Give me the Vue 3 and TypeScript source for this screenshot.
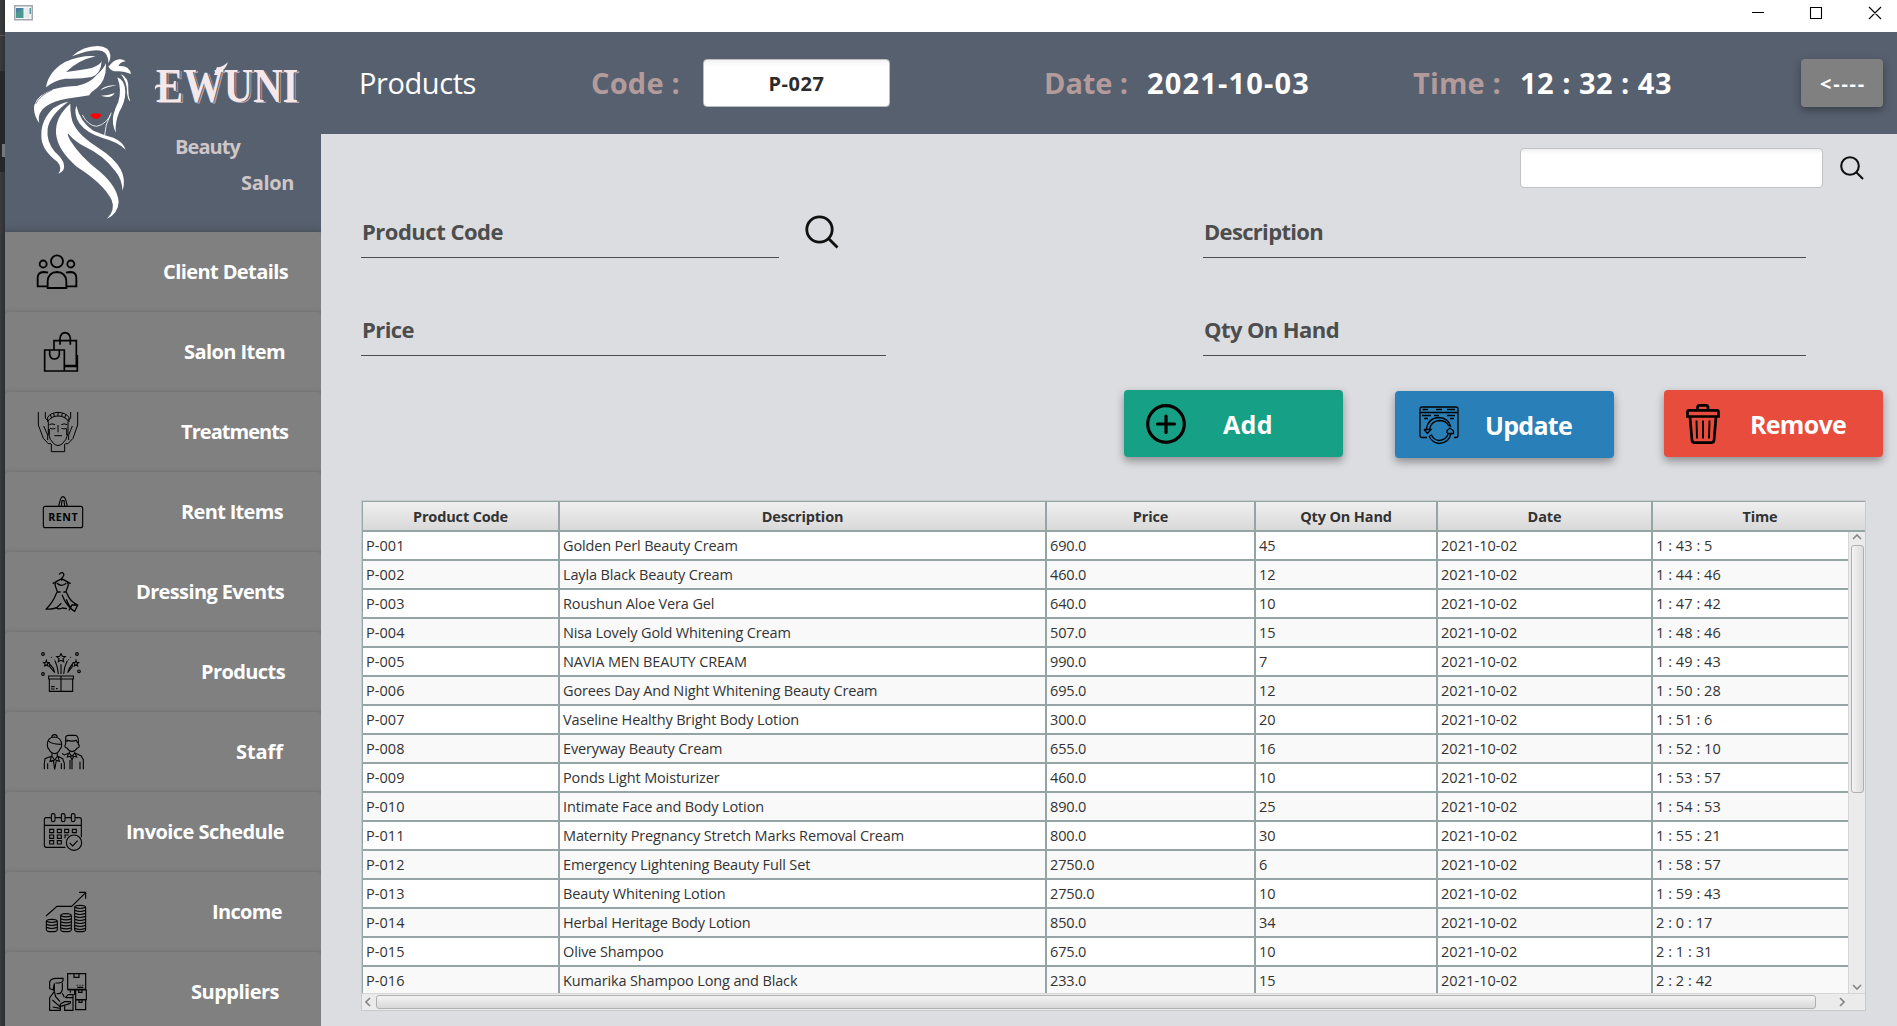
<script setup lang="ts">
import type { Directive } from 'vue'

interface NavItem {
  label: string
  width: number
  right: number
  y: number
  stroke: number
  path: string
}

interface Product {
  code: string
  description: string
  price: string
  qty: string
  time: string
}

// Spreads the letters of a caption over the given width in pixels.
const vFit: Directive<HTMLElement, number> = {
  mounted(el, { value }) {
    const count = (el.textContent ?? '').trim().length
    const natural = el.getBoundingClientRect().width
    el.style.letterSpacing = `${(value - natural) / count}px`
  },
}

const nav: NavItem[] = [
  {
    label: 'Client Details', width: 125, right: 33, y: 21, stroke: 5.5,
    path: 'M153 109a18 18 0 1 0 36 0a18 18 0 1 0-36 0M119 117a10.500 10.500 0 1 0 21 0a10.500 10.500 0 1 0-21 0M202 117a10.500 10.500 0 1 0 21 0a10.500 10.500 0 1 0-21 0M143 189V168Q145 142 171 141Q197 142 199 168V189ZM143 184H113V158Q114 142 130 141Q138 141 144 143M199 184H229V158Q228 142 213 141Q204 141 198 143',
  },
  {
    label: 'Salon Item', width: 101, right: 36, y: 261, stroke: 5,
    path: 'M134 375H193V438H134ZM149 376V388Q151 402 163 402Q176 402 178 388V376M162 374V347H229V422H194M180 359V340Q182 324 195 323Q209 324 211 340V359M194 438H232V390M194 424H232',
  },
  {
    label: 'Treatments', width: 107, right: 33, y: 501, stroke: 3,
    path: 'M115 561V600L130 640L145 656H153M233 561V600L219 640L204 656H196M136 561V580L146 588M212 561V580L202 588M143 577Q152 563 174 562Q198 563 207 577V590Q196 573 174 573Q154 573 143 590V577M151 569L155 580M161 564L163 575M174 562V573M187 564L185 575M197 569L194 580M145 590V625Q149 646 161 656Q174 667 187 656Q200 646 204 625V590M148 599Q156 594 165 599M184 599Q193 594 201 599M150 610Q158 614 166 610M184 610Q192 614 200 610M174 600V622M163 632H186M154 657V680H194V657M131 603L143 630V645M217 603L206 630V645M148 612V630M200 612V630',
  },
  {
    label: 'Rent Items', width: 102, right: 38, y: 6, stroke: 3.4,
    path: 'M136 109H242Q248 109 248 115V167Q248 173 242 173H136Q130 173 130 167V115Q130 109 136 109ZM176 108L182 86Q189 74 196 86L202 108M184 108L186 92H192L194 108',
  },
  {
    label: 'Dressing Events', width: 148, right: 37, y: 246, stroke: 3.8,
    path: 'M178 314Q180 307 187 308Q195 312 189 320L185 325V332M185 326L158 341M185 326L212 341M168 336L165 345L172 365L168 373Q160 395 139 417Q155 419 170 413L184 400M202 336L205 345L198 365L202 373Q210 395 233 405L224 424Q200 410 186 374M171 340Q184 352 199 340M172 366H182M190 366H198M169 414Q178 419 187 414L201 416M199 388Q207 410 218 421M207 421L216 405L232 405',
  },
  {
    label: 'Products', width: 84, right: 36, y: 486, stroke: 3.3,
    path: 'M146 618H220V627H146ZM148 628V664H218V628M183 618V664M153 650H164M168 656H173M153 657H164M183 551L187 559L196 560L189 566L191 575L183 571L175 575L177 566L170 560L179 559ZM139 571L141 577L147 578L142 582L144 588L139 585L134 588L135 582L131 578L137 577ZM228 571L230 577L236 578L231 582L233 588L228 585L223 588L224 582L220 578L226 577ZM183 583V612M175 612L172 592L165 572M191 612L194 592L202 572M164 608L160 595L149 582V590ZM203 608L208 595L217 582V590ZM125 552a4 4 0 1 0 8 0a4 4 0 1 0-8 0M227 552a4 4 0 1 0 8 0a4 4 0 1 0-8 0M125 612a4 4 0 1 0 8 0a4 4 0 1 0-8 0M233 604a4 4 0 1 0 8 0a4 4 0 1 0-8 0M154 562H156M162 569H163M204 569H206M210 562H212',
  },
  {
    label: 'Staff', width: 47, right: 38, y: 36, stroke: 3.3,
    path: 'M155 112Q156 104 164 104Q171 104 172 112M142 136Q141 112 163 111Q185 112 185 136Q185 145 180 147Q175 160 164 161Q152 160 147 148Q142 145 142 136M146 123Q152 132 182 133M156 160V169L164 180L172 169V160M156 168L135 176L133 190V208M172 168L188 176L193 190V208M154 170L150 184L160 181L164 208L169 181L178 184L174 170M143 190V207M184 190V207M149 184H158M197 133V111Q199 106 206 106H227Q237 109 235 133Q240 136 236 142L231 145Q226 154 216 155Q206 154 202 145L196 142Q193 136 197 133M201 126V121Q217 126 229 121L233 129M208 155V160L216 169L224 160V155M208 159L193 165L186 160M224 159L243 167L250 179V208M205 161L202 171L211 169L216 180L221 169L230 171L226 161M216 175V208M210 180V208M240 185V208',
  },
  {
    label: 'Invoice Schedule', width: 158, right: 37, y: 276, stroke: 3.3,
    path: 'M196 442H139Q133 442 133 436V359Q133 353 139 353H152M165 353H182M196 353H213M226 353H238Q244 353 244 359V412M133 376H244M154 345Q154 341 159 341Q165 341 165 345V360Q165 365 159 365Q154 365 154 360ZM184 345Q184 341 189 341Q195 341 195 345V360Q195 365 189 365Q184 365 184 360ZM214 345Q214 341 219 341Q225 341 225 345V360Q225 365 219 365Q214 365 214 360ZM149 388H161V398H149ZM172 388H184V398H172ZM194 388H206V398H194ZM217 388H229V398H217ZM149 405H161V415H149ZM172 405H184V415H172ZM149 422H161V432H149ZM172 422H184V432H172ZM195 415V405H206M199 428a23 23 0 1 0 46 0a23 23 0 1 0-46 0M209 429L218 438L233 422',
  },
  {
    label: 'Income', width: 70, right: 39, y: 516, stroke: 3.3,
    path: 'M138 648L171 619H215L257 578M237 577H257V596M139 664Q139 658 155 658Q172 658 172 664V689Q172 695 155 695Q139 695 139 689ZM139 664Q155 671 172 664M139 673Q155 680 172 673M139 682Q155 689 172 682M182 647Q182 641 198 641Q214 641 214 647V689Q214 695 198 695Q182 695 182 689ZM182 647Q198 654 214 647M182 656Q198 663 214 656M182 665Q198 672 214 665M182 674Q198 681 214 674M182 683Q198 690 214 683M224 622Q224 616 240 616Q257 616 257 622V689Q257 695 240 695Q224 695 224 689ZM224 622Q240 629 257 622M224 631Q240 638 257 631M224 640Q240 647 257 640M224 649Q240 656 257 649M224 658Q240 665 257 658M224 667Q240 674 257 667M224 676Q240 683 257 676M224 685Q240 692 257 685',
  },
  {
    label: 'Suppliers', width: 88, right: 42, y: 756, stroke: 3.5,
    path: 'M203 821H257V868H203ZM222 821V832H237V821M232 854V857M240 854V857M248 854V857M232 862H250M203 870H224V885M227 870H259V899H227ZM236 870V877H246V870M227 900H257V929H227ZM237 900V907H246V900M196 893L205 884H219V931H194V915M196 893H219M211 872V878M163 850L159 870L149 866V845Q154 834 170 835H189V842Q185 850 166 849M187 849V868Q185 880 176 881H170M163 851V875L149 893V931H181V912L194 905H211Q213 909 209 911L180 920L157 900M163 875L167 890L180 905M187 880L193 892M158 921L181 925',
  },
]

const products: Product[] = [
  { code: 'P-001', description: 'Golden Perl Beauty Cream', price: '690.0', qty: '45', time: '1 : 43 : 5' },
  { code: 'P-002', description: 'Layla Black Beauty Cream', price: '460.0', qty: '12', time: '1 : 44 : 46' },
  { code: 'P-003', description: 'Roushun Aloe Vera Gel', price: '640.0', qty: '10', time: '1 : 47 : 42' },
  { code: 'P-004', description: 'Nisa Lovely Gold Whitening Cream', price: '507.0', qty: '15', time: '1 : 48 : 46' },
  { code: 'P-005', description: 'NAVIA MEN BEAUTY CREAM', price: '990.0', qty: '7', time: '1 : 49 : 43' },
  { code: 'P-006', description: 'Gorees Day And Night Whitening Beauty Cream', price: '695.0', qty: '12', time: '1 : 50 : 28' },
  { code: 'P-007', description: 'Vaseline Healthy Bright Body Lotion', price: '300.0', qty: '20', time: '1 : 51 : 6' },
  { code: 'P-008', description: 'Everyway Beauty Cream', price: '655.0', qty: '16', time: '1 : 52 : 10' },
  { code: 'P-009', description: 'Ponds Light Moisturizer', price: '460.0', qty: '10', time: '1 : 53 : 57' },
  { code: 'P-010', description: 'Intimate Face and Body Lotion', price: '890.0', qty: '25', time: '1 : 54 : 53' },
  { code: 'P-011', description: 'Maternity Pregnancy Stretch Marks Removal Cream', price: '800.0', qty: '30', time: '1 : 55 : 21' },
  { code: 'P-012', description: 'Emergency Lightening Beauty Full Set', price: '2750.0', qty: '6', time: '1 : 58 : 57' },
  { code: 'P-013', description: 'Beauty Whitening Lotion', price: '2750.0', qty: '10', time: '1 : 59 : 43' },
  { code: 'P-014', description: 'Herbal Heritage Body Lotion', price: '850.0', qty: '34', time: '2 : 0 : 17' },
  { code: 'P-015', description: 'Olive Shampoo', price: '675.0', qty: '10', time: '2 : 1 : 31' },
  { code: 'P-016', description: 'Kumarika Shampoo Long and Black', price: '233.0', qty: '15', time: '2 : 2 : 42' },
]
</script>

<template>
  <div class="screen">
    <div class="desktop-edge"><i class="e1"></i><i class="e2"></i><i class="e3"></i></div>
    <div class="window">
      <div class="titlebar">
        <svg class="app-icon" width="19" height="16" viewBox="0 0 19 16">
          <rect x=".75" y=".75" width="17.500" height="14" fill="#f4f5f7" stroke="#a4a8ae" stroke-width="1.500" />
          <rect x="2" y="3" width="7.500" height="10" fill="#4a9a92" />
          <path d="M2 3H9.500L2 8Z" fill="#477fa5" />
          <rect x="10.500" y="3" width="5" height="10" fill="#e9ecef" />
          <rect x="15.500" y="3" width="1.500" height="6" fill="#4f9fa5" />
        </svg>
        <svg class="controls" width="140" height="32" viewBox="1750 0 140 32" fill="none" stroke="#000" stroke-width="1.100">
          <path d="M1752 12.500H1764M1810.500 7.500H1821.500V18.500H1810.500ZM1869 7L1881 19M1881 7L1869 19" />
        </svg>
      </div>

      <div class="body">
        <aside class="sidebar">
          <div class="brand">
            <svg class="lady" width="99" height="175" viewBox="99 135 297 525" fill="#fff">
              <path d="M216 169Q250 138 293 138Q329 140 331 165Q332 180 325 188Q325 162 308 154Q280 143 216 169Z" />
              <path d="M138 262Q145 215 195 186Q245 165 287 169Q235 180 198 216Q245 210 275 204Q298 196 305 184Q303 222 275 231Q240 238 195 236Q160 242 138 262Z" />
              <path d="M318 190Q320 240 290 265Q270 279 268 286L240 290Q150 300 128 328Q112 345 118 370Q98 340 103 315Q112 285 160 268Q200 258 230 258Q270 250 290 225Q310 208 318 190Z" />
              <path d="M107 312Q120 285 157 270" fill="none" stroke="#57606f" stroke-width="2" />
              <path d="M325 200Q345 175 362 178Q372 180 377 184Q360 186 355 198Q388 195 393 222Q370 212 350 214Q335 215 325 200Z" />
              <path d="M362 222Q388 232 385 270Q384 290 391 304Q384 302 381 280Q382 245 362 222Z" />
              <path d="M352 232Q375 240 376 275Q376 305 358 335Q345 365 347 398Q335 370 340 345Q345 325 355 305Q366 270 352 232Z" />
              <path d="M205 305Q150 345 143 385Q138 425 165 456Q200 486 190 510Q185 518 175 521Q188 503 172 485Q125 450 124 410Q122 360 160 325Q180 310 205 305Z" />
              <path d="M211 311Q165 350 168 400Q172 450 230 500Q310 550 335 600Q347 630 321 656Q355 640 356 605Q352 560 300 515Q240 470 210 420Q200 400 205 401Q225 425 255 440Q310 465 345 512Q365 535 368 572Q378 540 362 508Q345 475 290 440Q220 395 214 350Q210 330 211 311Z" />
              <path d="M229 317Q220 340 238 370Q260 400 310 415Q350 425 377 449Q370 426 340 413Q310 405 280 392Q240 365 229 317Z" />
              <path d="M247 345Q265 378 290 379Q322 372 334 338M331 345Q315 375 314 405" fill="none" stroke="#fff" stroke-width="2.500" />
              <path d="M300 271Q318 254 350 256Q325 259 300 271ZM303 287Q325 287 344 279Q338 291 322 291Q310 290 303 287Z" />
              <path d="M270 346Q280 337 288 341Q296 337 305 346Q297 357 288 357Q278 356 270 346Z" fill="#f00" />
            </svg>
            <div class="brand-text">
              <div class="ewuni">
                <span>EWUNI</span>
                <svg width="150" height="50" viewBox="0 0 150 50" fill="#f4e8ea">
                  <path d="M60 14L63 6Q68 7 74 1Q72 8 67 10L65 14Z" />
                  <path d="M1 29Q0 23 5 23.500L14 25V26.500L5 26Q2 26 1 29Z" />
                </svg>
              </div>
              <div class="beauty"><span v-fit="65">Beauty</span></div>
              <div class="salon"><span v-fit="53">Salon</span></div>
            </div>
          </div>
          <nav>
            <a v-for="item in nav" :key="item.label" class="nav-item">
              <svg width="90" height="80" :viewBox="`15 ${item.y} 270 240`" fill="none" stroke="#000" :stroke-width="item.stroke">
                <path :d="item.path" />
                <text v-if="item.label === 'Rent Items'" x="145" y="153" textLength="88" class="rent">RENT</text>
              </svg>
              <span v-fit="item.width" :style="{ marginRight: item.right + 'px' }">{{ item.label }}</span>
            </a>
          </nav>
        </aside>

        <div class="main">
          <header class="header">
            <span v-fit="117" class="title">Products</span>
            <span v-fit="89" class="tag code-tag">Code :</span>
            <div class="code-box"><span v-fit="56">P-027</span></div>
            <span v-fit="84" class="tag date-tag">Date :</span>
            <span v-fit="163" class="value date">2021-10-03</span>
            <span v-fit="88" class="tag time-tag">Time :</span>
            <span v-fit="152" class="value time">12 : 32 : 43</span>
            <button class="back"><span v-fit="46">&lt;----</span></button>
          </header>

          <section class="content">
            <div class="search-row">
              <div class="search-box"></div>
              <svg width="24" height="24" viewBox="0 0 24 24" fill="none" stroke="#111" stroke-width="2.100">
                <circle cx="10" cy="10" r="8.800" /><path d="M16.500 16.500L23 23" />
              </svg>
            </div>

            <div class="form">
              <div class="form-row">
                <div class="field f1"><span v-fit="141">Product Code</span></div>
                <svg class="lens" width="34" height="34" viewBox="0 0 34 34" fill="none" stroke="#111" stroke-width="2.800">
                  <circle cx="14.500" cy="14.500" r="12.700" /><path d="M23.500 23.500L32.500 32.500" />
                </svg>
                <div class="field f2"><span v-fit="119">Description</span></div>
              </div>
              <div class="form-row">
                <div class="field f3"><span v-fit="52">Price</span></div>
                <div class="field f4"><span v-fit="135">Qty On Hand</span></div>
              </div>
            </div>

            <div class="actions">
              <button class="btn add">
                <svg width="40" height="40" viewBox="0 0 40 40" fill="none" stroke="#000" stroke-width="3.200">
                  <circle cx="20" cy="20" r="18.300" /><path d="M20 12V28.500M11.500 20H28.500" stroke-linecap="round" />
                </svg>
                <span v-fit="50">Add</span>
              </button>
              <button class="btn update">
                <svg width="40" height="40" viewBox="0 -1 40 40" fill="none" stroke="#000" stroke-width="1.300">
                  <path d="M8 31.500H3Q1 31.500 1 29.500V3Q1 1 3 1H37Q39 1 39 3V29.500Q39 31.500 37 31.500H35M1 6.500H39M3.500 3.500H9M17 3.500H23M28 3.500H36M3 9.500H12M15 9.500H20M28 9.500H36M5 12.500H9M31 12.500H35" />
                  <path d="M7.500 23Q9 12 20 11.500Q29 12 31.500 20L29.500 19.500Q27 14.500 20 14.500Q12 15.500 10.500 23M5 23.500L8.500 27.500L12 23.500H5M10.500 30L12.500 29Q15 34 20 34.500Q27 34 29.500 27.500M32 27.500Q30 37 20 37.500Q13 36.500 10 30M28 27V24.500L31 22L34.500 25V27.500H28" />
                </svg>
                <span v-fit="87">Update</span>
              </button>
              <button class="btn remove">
                <svg width="34" height="40" viewBox="0 0 34 40" fill="none" stroke="#000" stroke-width="2.700">
                  <path d="M3 6.300H31Q32.500 6.300 32.500 8V12.500H1.500V8Q1.500 6.300 3 6.300ZM11.500 6V3Q12 1.300 13.500 1.300H20Q21.500 1.300 22 3V6M4 13L6 36.500Q6.300 38.700 8.500 38.700H25.500Q27.700 38.700 28 36.500L30 13" />
                  <path d="M10.500 16.500L11 34.500M17 16.500V34.500M23.500 16.500L23 34.500" stroke-width="1.900" />
                </svg>
                <span v-fit="96">Remove</span>
              </button>
            </div>

            <div class="table">
              <div class="thead">
                <div>Product Code</div>
                <div>Description</div>
                <div>Price</div>
                <div>Qty On Hand</div>
                <div>Date</div>
                <div>Time</div>
              </div>
              <div class="tbody">
                <div class="rows">
                  <div v-for="p in products" :key="p.code" class="row">
                    <div class="figure">{{ p.code }}</div>
                    <div>{{ p.description }}</div>
                    <div>{{ p.price }}</div>
                    <div>{{ p.qty }}</div>
                    <div class="figure">2021-10-02</div>
                    <div class="figure">{{ p.time }}</div>
                  </div>
                </div>
                <div class="vbar">
                  <svg width="10" height="6" viewBox="0 0 10 6"><path d="M1 5L5 1L9 5" /></svg>
                  <div class="vthumb"></div>
                  <svg class="down" width="10" height="6" viewBox="0 0 10 6"><path d="M1 1L5 5L9 1" /></svg>
                </div>
              </div>
              <div class="hbar">
                <svg width="6" height="10" viewBox="0 0 6 10"><path d="M5 1L1 5L5 9" /></svg>
                <div class="hthumb"></div>
                <svg class="next" width="6" height="10" viewBox="0 0 6 10"><path d="M1 1L5 5L1 9" /></svg>
              </div>
            </div>
          </section>
        </div>
      </div>
    </div>
  </div>
</template>

<style>
body {
  overflow: hidden;
}
</style>

<style scoped>
.screen {
  display: flex;
  width: 1897px;
  height: 1026px;
  overflow: hidden;
  font-family: 'Open Sans', 'Noto Sans', sans-serif;
}
.screen * {
  box-sizing: border-box;
}
.screen span {
  display: inline-block;
  white-space: pre;
}
.desktop-edge {
  width: 5px;
  background: linear-gradient(90deg, #3a3b3d, #303133);
  display: flex;
  flex-direction: column;
}
.e1 {
  margin-top: 35px;
  height: 1px;
  background: #555;
}
.e2 {
  margin-top: 35px;
  height: 101px;
  background: #262728;
}
.e3 {
  margin: -28px 0 0 2px;
  height: 13px;
  background: #77797b;
}
.window {
  width: 1892px;
  display: flex;
  flex-direction: column;
}
.titlebar {
  height: 32px;
  background: #fff;
  display: flex;
  justify-content: space-between;
}
.app-icon {
  margin: 5px 0 0 9px;
}
.controls {
  margin-right: 7px;
}
.body {
  flex: 1;
  display: flex;
}
.sidebar {
  width: 316px;
  background: #808080;
}
.brand {
  height: 200px;
  background: linear-gradient(#57606f 190px, #525a68);
  display: flex;
}
.lady {
  margin: 13px 0 0 28px;
}
.brand-text {
  margin-left: 22px;
  width: 160px;
}
.ewuni {
  height: 50px;
  margin-top: 29px;
  position: relative;
}
.ewuni span {
  font: bold 49px/50px 'Liberation Serif', serif;
  color: #f4e8ea;
  transform: scaleX(0.83);
  transform-origin: 0 50%;
  margin-left: 2px;
  text-shadow: 1.5px 0 0 #57606f, 2.5px 1px 0 #b9a6ae;
}
.ewuni svg {
  position: absolute;
  left: 0;
  top: 0;
}
.beauty,
.salon {
  font-size: 20px;
  font-weight: 700;
  line-height: 36px;
  color: #cfc6c7;
}
.beauty {
  margin: 18px 0 0 21px;
}
.salon {
  margin-left: 87px;
}
.nav-item {
  height: 80px;
  display: flex;
  justify-content: space-between;
  align-items: center;
  border-radius: 4px;
  box-shadow: 0 0 5px rgba(0, 0, 0, 0.16);
  background: #808080;
  color: #fff;
  font-size: 20px;
  font-weight: 700;
}
.nav-item span {
  line-height: 30px;
}
.rent {
  font: bold 32px 'Open Sans', sans-serif;
  fill: #000;
  stroke: none;
}
.main {
  width: 1576px;
  display: flex;
  flex-direction: column;
}
.header {
  height: 102px;
  background: #57606f;
  display: flex;
  align-items: center;
  color: #fff;
  font-size: 29px;
  white-space: nowrap;
}
.header > span {
  line-height: 40px;
}
.title {
  margin-left: 38px;
}
.tag {
  font-weight: 700;
  color: #b49b9b;
}
.value {
  font-weight: 700;
}
.code-tag {
  margin-left: 115px;
}
.code-box {
  width: 187px;
  height: 48px;
  margin-left: 23px;
  border: 1px solid #bdbdbd;
  border-radius: 4px;
  background: linear-gradient(#f2f2f2, #fff 6px);
  color: #2b2b2b;
  font-size: 20px;
  font-weight: 700;
  display: flex;
  justify-content: center;
  align-items: center;
}
.date-tag {
  margin-left: 154px;
}
.date {
  margin-left: 19px;
}
.time-tag {
  margin-left: 103px;
}
.time {
  margin-left: 19px;
}
.back {
  width: 82px;
  height: 48px;
  margin: 0 14px 0 auto;
  padding: 0 0 0 2px;
  border: 0;
  border-radius: 4px;
  background: #808080;
  color: #fff;
  font: bold 20px 'Open Sans', sans-serif;
  box-shadow: 0 3px 9px rgba(0, 0, 0, 0.35);
}
.content {
  flex: 1;
  background: #dcdde1;
  padding: 14px 0 0 40px;
}
.search-row {
  display: flex;
  justify-content: flex-end;
  align-items: center;
  height: 40px;
  gap: 17px;
  padding-right: 33px;
}
.search-box {
  width: 303px;
  height: 40px;
  border: 1px solid #c0c2c4;
  border-radius: 4px;
  background: linear-gradient(#efefef, #fff 5px);
}
.form {
  margin-top: 18px;
}
.form-row {
  display: flex;
  height: 52px;
  margin-bottom: 46px;
}
.field {
  border-bottom: 1px solid #4d4d4d;
  height: 52px;
  padding-left: 1px;
  color: #4d4d4d;
  font-size: 22px;
  font-weight: 700;
  line-height: 51px;
}
.f1 {
  width: 418px;
}
.lens {
  margin: 9px 0 0 26px;
}
.f2,
.f4 {
  width: 603px;
}
.f2 {
  margin-left: 364px;
}
.f3 {
  width: 525px;
}
.f4 {
  margin-left: 317px;
}
.actions {
  display: flex;
  height: 67px;
  margin: -12px 0 0 763px;
}
.btn {
  width: 219px;
  height: 67px;
  flex: none;
  border: 0;
  padding: 0;
  border-radius: 4px;
  color: #fff;
  font: bold 25px 'Open Sans', sans-serif;
  display: flex;
  align-items: center;
  box-shadow: 0 4px 9px rgba(0, 0, 0, 0.36);
}
.add {
  background: #16a085;
}
.add svg {
  margin: 0 37px 0 22px;
}
.update {
  background: #2980b9;
  margin: 1px 0 0 52px;
}
.update svg {
  margin: 0 26px 0 24px;
}
.remove {
  background: #e74c3c;
  margin-left: 50px;
}
.remove svg {
  margin: 0 30px 0 22px;
}
.table {
  width: 1505px;
  height: 511px;
  margin-top: 43px;
  border: 1px solid #c8cacb;
  background: #fff;
  display: flex;
  flex-direction: column;
}
.thead,
.row {
  display: grid;
  grid-template-columns: 198px 487px 209px 182px 215px 1fr;
}
.thead {
  height: 31px;
  flex: none;
  border-top: 1px solid #95a5a6;
  border-bottom: 2px solid #95a5a6;
  background: linear-gradient(#efefef, #d9d9d9);
  font-size: 14.500px;
  font-weight: 700;
  line-height: 30px;
  letter-spacing: -0.15px;
  color: #333;
  text-align: center;
}
.thead div,
.row div {
  border-right: 2px solid #95a5a6;
}
.thead div:last-child,
.row div:last-child {
  border-right: 0;
}
.thead div:last-child {
  padding-left: 2px;
}
.thead div:first-child,
.row div:first-child {
  border-left: 1px solid #95a5a6;
}
.tbody {
  height: 461px;
  flex: none;
  display: flex;
}
.rows {
  width: 1486px;
  overflow: hidden;
}
.row {
  height: 29px;
  border-bottom: 2px solid #95a5a6;
  font-size: 14.500px;
  line-height: 27px;
  letter-spacing: -0.14px;
  color: #333;
}
.row:nth-child(even) {
  background: #f9f9f9;
}
.row div {
  padding-left: 3px;
  white-space: nowrap;
}
.row .figure {
  letter-spacing: 0.06px;
}
.vbar {
  width: 17px;
  border-left: 1px solid #d6d6d6;
  background: #ebebeb;
  display: flex;
  flex-direction: column;
  align-items: center;
  padding: 2px 0 3px;
}
.table svg {
  fill: none;
  stroke: #848484;
  stroke-width: 1.6;
}
.vthumb {
  width: 13px;
  height: 248px;
  margin: 5px 0 auto;
  border: 1px solid #b0b0b0;
  border-radius: 3px;
  background: linear-gradient(90deg, #f3f3f3, #dcdcdc);
}
.hbar {
  flex: 1;
  border-top: 1px solid #d6d6d6;
  background: #ebebeb;
  display: flex;
  align-items: center;
  padding: 0 20px 0 3px;
}
.hthumb {
  width: 1440px;
  height: 14px;
  margin: 0 auto 0 5px;
  border: 1px solid #b0b0b0;
  border-radius: 3px;
  background: linear-gradient(#f3f3f3, #d9d9d9);
}
</style>
